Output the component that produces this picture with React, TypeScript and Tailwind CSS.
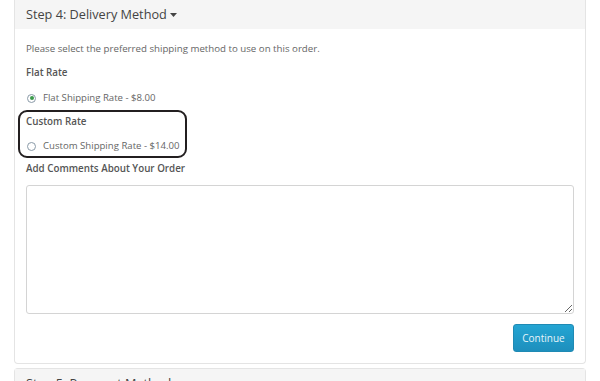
function Radio({ checked }: { checked?: boolean }): JSX.Element {
  return (
    <span className="flex h-[9px] w-[9px] items-center justify-center rounded-full border border-[#8a9aa8] bg-white">
      {checked && <span className="h-[4px] w-[4px] rounded-full bg-[#3a9a4a]" />}
    </span>
  )
}

export default function App(): JSX.Element {
  return (
    <div className="min-h-[381px] bg-white px-[14px] font-['Open_Sans',sans-serif] text-[#666]">
      <div className="rounded-b-[4px] border border-t-0 border-[#e4e4e4]">
        <div className="flex h-[29px] items-center bg-[#f5f5f5] px-[11px]">
          <span className="text-[12.7px] text-[#444]">Step 4: Delivery Method</span>
          <svg width="7" height="4" viewBox="0 0 7 4" className="ml-[3px] mt-[1px]">
            <path d="M0 0h7L3.5 4z" fill="#444" />
          </svg>
        </div>

        <div className="px-[11px] pb-[11px] pt-[13px]">
          <p className="text-[9.7px] leading-[14px]">
            Please select the preferred shipping method to use on this order.
          </p>

          <p className="mt-[10px] text-[9.8px] font-semibold leading-[14px] text-[#555]">Flat Rate</p>
          <label className="mt-[11px] flex h-[14px] items-center gap-[7px] pl-[1px] text-[9.6px]">
            <Radio checked />
            Flat Shipping Rate - $8.00
          </label>

          <div className="relative">
            <p className="mt-[10px] text-[9.8px] font-semibold leading-[14px] text-[#555]">Custom Rate</p>
            <label className="mt-[10px] flex h-[14px] items-center gap-[7px] pl-[1px] text-[9.6px]">
              <Radio />
              Custom Shipping Rate - $14.00
            </label>
            <div className="pointer-events-none absolute left-[-8px] top-[-5px] h-[48px] w-[169px] rounded-[9px] border-2 border-[#231f20]" />
          </div>

          <p className="mt-[9px] text-[9.8px] font-semibold leading-[14px] text-[#555]">
            Add Comments About Your Order
          </p>
          <textarea className="mt-[9px] block h-[129px] w-full rounded-[3px] border border-[#d4d4d4] bg-white" />

          <div className="mt-[10px] flex justify-end">
            <button
              type="button"
              className="h-[28px] w-[61px] rounded-[3px] border border-[#1f8ab4] bg-gradient-to-b from-[#24a5d3] to-[#1d8fbd] text-[10px] text-[#e6f4fa]"
            >
              Continue
            </button>
          </div>
        </div>
      </div>

      <div className="mt-[4px] rounded-t-[4px] border border-b-0 border-[#e4e4e4]">
        <div className="flex h-[29px] items-center bg-[#f5f5f5] px-[11px]">
          <span className="text-[12.7px] text-[#444]">Step 5: Payment Method</span>
        </div>
      </div>
    </div>
  )
}
